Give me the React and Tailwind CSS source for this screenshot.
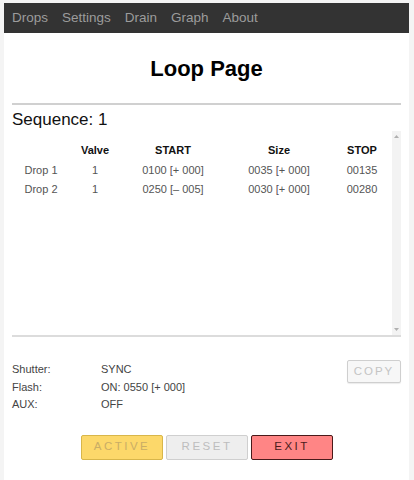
import React from "react";

const rows = [
  ["Drop 1", "1", "0100 [+ 000]", "0035 [+ 000]", "00135"],
  ["Drop 2", "1", "0250 [\u2013 005]", "0030 [+ 000]", "00280"],
];

export default function App() {
  return (
    <div className="w-[414px] h-[480px] bg-[#f4f4f4] pt-[3px] pl-[4px] overflow-hidden" style={{ fontFamily: '"Liberation Sans", Arial, sans-serif' }}>
      <div className="w-[405px] h-[477px] bg-white flex flex-col">
        <nav className="h-[30px] bg-[#333333] flex items-center gap-[14px] pl-[8px] text-[13.5px] text-[#9c9c9c]">
          <span>Drops</span>
          <span>Settings</span>
          <span>Drain</span>
          <span>Graph</span>
          <span>About</span>
        </nav>
        <h1 className="text-center font-bold text-[22px] leading-none text-black mt-[25px]">Loop Page</h1>
        <div className="mx-[8px] mt-[23px] h-[2px] bg-[#d0d0d0]" />
        <div className="pl-[8px] mt-[5px] text-[17px] leading-[20px] text-[#111]">Sequence: 1</div>
        <div className="mx-[8px] h-[207px] border-b-[2px] border-[#dcdcdc] flex">
          <div className="flex-1 pt-[11px]">
            <div className="grid grid-cols-[58px_50px_106px_106px_60px] text-[11px] leading-[19.5px]">
              <div />
              <div className="text-center font-bold text-[#111]">Valve</div>
              <div className="text-center font-bold text-[#111]">START</div>
              <div className="text-center font-bold text-[#111]">Size</div>
              <div className="text-center font-bold text-[#111]">STOP</div>
              {rows.map((r) => (
                <React.Fragment key={r[0]}>
                  <div className="text-center text-[#555]">{r[0]}</div>
                  <div className="text-center text-[#555]">{r[1]}</div>
                  <div className="text-center text-[#555]">{r[2]}</div>
                  <div className="text-center text-[#555]">{r[3]}</div>
                  <div className="text-center text-[#555]">{r[4]}</div>
                </React.Fragment>
              ))}
            </div>
          </div>
          <div className="w-[11px] mt-[1px] bg-[#f3f3f3] flex flex-col items-center justify-between py-[4px]">
            <svg width="5" height="3" viewBox="0 0 5 3"><path d="M0 3 L2.5 0 L5 3 Z" fill="#b0b0b0" /></svg>
            <svg width="5" height="3" viewBox="0 0 5 3"><path d="M0 0 L2.5 3 L5 0 Z" fill="#b0b0b0" /></svg>
          </div>
        </div>
        <div className="mx-[8px] mt-[23px] flex justify-between">
          <div className="grid grid-cols-[89px_auto] text-[11px] leading-[17.5px] text-[#444] pt-[1px]">
            <span>Shutter:</span><span>SYNC</span>
            <span>Flash:</span><span>ON: 0550 [+ 000]</span>
            <span>AUX:</span><span>OFF</span>
          </div>
          <button className="w-[54px] h-[23px] border border-[#cfcfcf] rounded-[2px] bg-[#f7f7f7] text-[11.5px] tracking-[2px] text-[#c4c4c4] shadow-[0_1px_1px_rgba(0,0,0,0.08)]">COPY</button>
        </div>
        <div className="mt-[21px] flex justify-center gap-[3px] pl-[1px]">
          <button className="w-[82px] h-[25px] rounded-[2px] border border-[#d8b64a] bg-[#fcd86a] text-[11.5px] tracking-[2.5px] text-[#c9ad66]">ACTIVE</button>
          <button className="w-[82px] h-[25px] rounded-[2px] border border-[#cfcfcf] bg-[#eeeeee] text-[11.5px] tracking-[2.5px] text-[#bdbdbd]">RESET</button>
          <button className="w-[82px] h-[25px] rounded-[2px] border border-[#4a1a1a] bg-[#ff8585] text-[11.5px] tracking-[2.5px] text-[#4a1c1c]">EXIT</button>
        </div>
      </div>
    </div>
  );
}
